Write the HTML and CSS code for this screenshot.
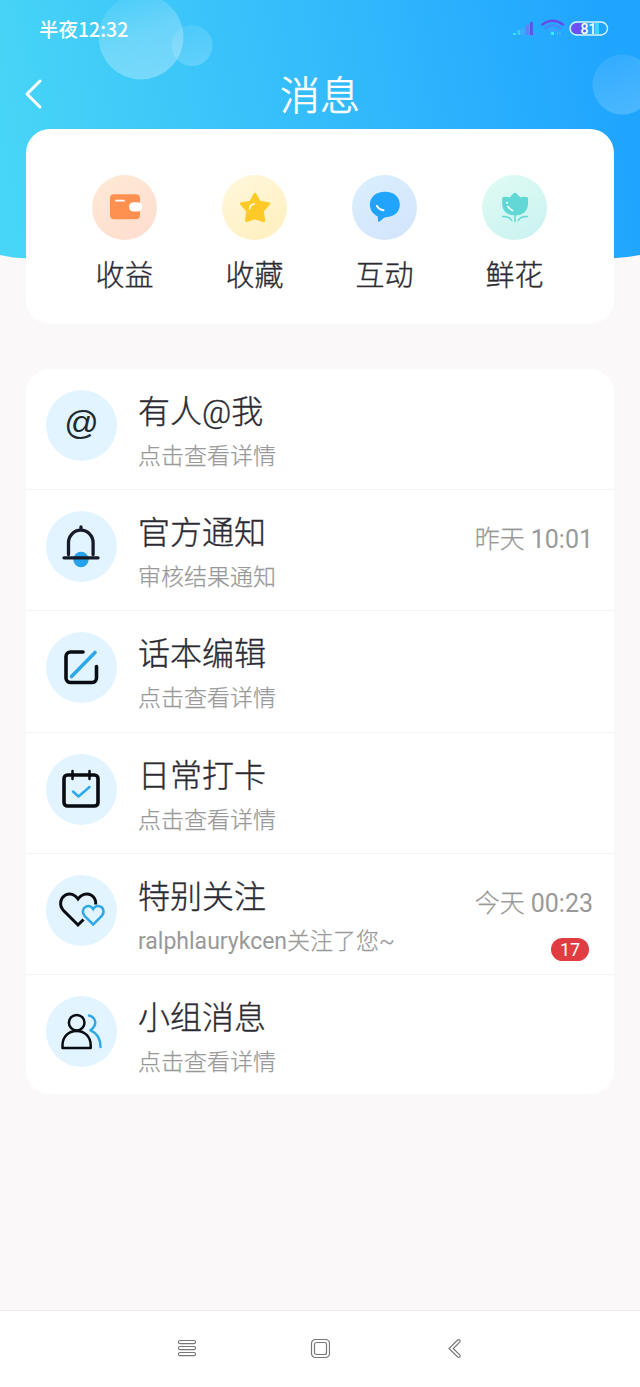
FILE: index.html
```html
<!DOCTYPE html>
<html lang="zh-CN">
<head>
<meta charset="utf-8">
<title>消息</title>
<link rel="stylesheet" href="styles.css">
</head>
<body>
<div class="screen">
  <svg class="backdrop" viewBox="0 0 640 264" aria-hidden="true">
    <defs>
      <linearGradient id="sky" gradientUnits="userSpaceOnUse" x1="0" y1="170" x2="610" y2="50"><stop offset="0" stop-color="#48d6f6"/><stop offset=".5" stop-color="#35bdfb"/><stop offset="1" stop-color="#20a5ff"/></linearGradient>
      <linearGradient id="bubble" x1=".25" y1="0" x2=".65" y2="1"><stop offset="0" stop-color="#fff" stop-opacity=".06"/><stop offset=".5" stop-color="#fff" stop-opacity=".24"/><stop offset="1" stop-color="#fff" stop-opacity=".3"/></linearGradient>
      <linearGradient id="bubble2" x1=".25" y1="0" x2=".7" y2="1"><stop offset="0" stop-color="#fff" stop-opacity=".08"/><stop offset="1" stop-color="#fff" stop-opacity=".2"/></linearGradient>
    </defs>
    <path d="M0 0H640V255Q625 258 610 258.500H30Q12 258 0 255Z" fill="url(#sky)"/>
    <circle cx="141" cy="37" r="42.500" fill="url(#bubble)"/>
    <circle cx="192" cy="45.500" r="20.500" fill="url(#bubble2)"/>
    <circle cx="622.500" cy="84.500" r="30" fill="url(#bubble2)"/>
  </svg>

  <header class="header">
    <div class="status">
      <span class="clock">半夜12:32</span>
      <svg class="signals" width="98" height="20" viewBox="0 0 98 20">
        <g><rect x="2" y="14" width="3" height="2" fill="#37e6f4"/><rect x="6.500" y="11" width="3" height="5" fill="#42caf8"/><rect x="10.500" y="8.500" width="3" height="7.500" fill="#4aa5fa"/><rect x="15" y="6" width="3" height="10" fill="#5b83f1"/><rect x="19" y="3" width="2.800" height="13" rx=".6" fill="#6050e8"/></g>
        <g fill="none" stroke-linecap="round"><path d="M31.500 5.500Q41.500-2 52 5.500" stroke="#674be8" stroke-width="2.500"/><path d="M34.500 9Q41.500 3.500 49 9" stroke="#4b86f5" stroke-width="2.300"/><path d="M37.500 12Q41.500 9 46 12" stroke="#469cfa" stroke-width="2"/></g>
        <circle cx="41.500" cy="14.500" r="1.800" fill="#36eefa"/><path d="M46.500 13v3M49 13v3" stroke="#57b6ff" stroke-width="1"/>
        <path d="M66 4h4v11h-4a5.500 5.500 0 0 1 0-11" fill="#704ff0"/><rect x="69" y="4" width="6" height="11" fill="#565ff0"/><rect x="84" y="4" width="4" height="11" fill="#36d9fa"/>
        <rect x="59" y="3" width="37.500" height="13" rx="6.500" fill="none" stroke="#d9f2ff" stroke-width="1.400"/>
        <text class="battery-text" x="77.500" y="14.500" text-anchor="middle">81</text>
      </svg>
    </div>
    <div class="titlebar">
      <svg class="back" width="20" height="34" viewBox="0 0 20 34"><path d="M16 4 3 17l13 13" /></svg>
      <h1 class="title">消息</h1>
    </div>
  </header>

  <section class="shortcuts">
    <div class="shortcut">
      <svg class="shortcut-icon income" viewBox="0 0 65 65"><rect x="18" y="19.300" width="30" height="25" rx="4" fill="#ff9150"/><rect x="37" y="27.200" width="13" height="9.300" rx="4.650" fill="#fff"/><path d="M24 25.700h8" stroke="#fff" stroke-width="1.700" stroke-linecap="round"/></svg>
      <span>收益</span>
    </div>
    <div class="shortcut">
      <svg class="shortcut-icon favorite" viewBox="0 0 65 65"><path d="M33 19.500 37.300 27.300 46.500 28.800 40.200 36 41.500 45.600 33 42.800 24.600 45.600 25.900 36 19.600 28.800 28.700 27.300Z" fill="#ffc928" stroke="#ffc928" stroke-width="3.200" stroke-linejoin="round"/><path d="M27.700 33.800Q28 29.400 32 28.800" fill="none" stroke="#fffbe7" stroke-width="1.700" stroke-linecap="round"/></svg>
      <span>收藏</span>
    </div>
    <div class="shortcut">
      <svg class="shortcut-icon interact" viewBox="0 0 65 65"><path d="M33 16.800c9 0 14.800 5.200 14.800 12.800 0 7.400-5.500 12.300-13.800 12.700-3 .2-5.400 4.300-7 4.400-1.200 0-1-3.300-1.200-5.300-5-2-7.900-6.500-7.900-11.800 0-7.500 6-12.800 15.100-12.800Z" fill="#20a4fd"/><path d="M25 31Q27 34.700 31.500 35.200" fill="none" stroke="#fff" stroke-width="2" stroke-linecap="round"/></svg>
      <span>互动</span>
    </div>
    <div class="shortcut">
      <svg class="shortcut-icon flower" viewBox="0 0 65 65"><path d="M20.200 22.500Q23.800 20.800 27.500 22.500L31.700 18.300Q33 17.200 34.300 18.300L38.500 22.500Q42.300 20.800 46 22.500V29c0 7-5.600 11.500-13 11.500S20.200 36 20.200 29Z" fill="#62d8d6"/><path d="M33 39v7.500M20.700 41.500q6.500-.5 9 4M45.300 41.500q-6.500-.5-9 4" fill="none" stroke="#62d8d6" stroke-width="1.500" stroke-linecap="round"/><circle cx="25" cy="27.800" r="1.100" fill="#effffc"/><path d="M26 31.500q1.500 2.800 4.500 4" fill="none" stroke="#effffc" stroke-width="1.700" stroke-linecap="round"/></svg>
      <span>鲜花</span>
    </div>
  </section>

  <main class="messages">
    <article class="row">
      <svg class="row-icon" viewBox="0 0 71 71"><text class="at-sign" x="35.500" y="44" text-anchor="middle">@</text></svg>
      <div class="copy"><h2>有人@我</h2><p>点击查看详情</p></div>
    </article>
    <article class="row">
      <svg class="row-icon" viewBox="0 0 71 71"><circle cx="35" cy="48.500" r="7.700" fill="#26a1ed"/><g class="ink bell"><path d="M22.500 43.500V31.500a12.300 12.300 0 0 1 24.600 0v12M35 19v-3M18 46.800h34"/></g></svg>
      <div class="copy"><h2>官方通知</h2><p>审核结果通知</p></div>
      <div class="meta"><time>昨天 <span class="latin">10:01</span></time></div>
    </article>
    <article class="row">
      <svg class="row-icon" viewBox="0 0 71 71"><path class="ink bold" d="M37 20H24.500a4.500 4.500 0 0 0-4.500 4.500V46a4.500 4.500 0 0 0 4.500 4.500H46a4.500 4.500 0 0 0 4.500-4.500V34.500"/><path class="accent bold" d="M49 20.500 25.500 44.500"/></svg>
      <div class="copy"><h2>话本编辑</h2><p>点击查看详情</p></div>
    </article>
    <article class="row">
      <svg class="row-icon" viewBox="0 0 71 71"><g class="ink bold"><rect x="18" y="21" width="34" height="31" rx="3.500"/></g><path class="ink" d="M26.500 17v8M43.500 17v8"/><path class="accent" d="M27 37.500l5.500 5 11-9.500"/></svg>
      <div class="copy"><h2>日常打卡</h2><p>点击查看详情</p></div>
    </article>
    <article class="row">
      <svg class="row-icon" viewBox="0 0 71 71"><path class="ink heart" d="M37.500 44.500l-5.500 5.500-14.500-14.500C12.500 30 14.500 23 19.500 20c4.500-2.500 9.500-.5 12.500 3.800C35 19.500 40.500 17.500 45 20c3.200 1.800 5 5.500 4.700 9.500"/><path class="accent heart" d="M47.200 49.500 39 41.300c-3.500-3.500-2.300-8.200.8-9.600 2.700-1.200 5.700-.2 7.400 2.400 1.700-2.600 4.700-3.600 7.400-2.400 3.200 1.500 4.200 6.200.7 9.600Z"/></svg>
      <div class="copy"><h2>特别关注</h2><p><span class="latin">ralphlaurykcen</span>关注了您~</p></div>
      <div class="meta"><time>今天 <span class="latin">00:23</span></time><span class="count">17</span></div>
    </article>
    <article class="row">
      <svg class="row-icon" viewBox="0 0 71 71"><g class="ink person"><circle cx="30.700" cy="26.700" r="7.800"/><path d="M16.500 52V49.500C16.500 40.500 22.500 35 30.600 35S44.700 40.500 44.700 49.500V52Z"/></g><path class="accent person" d="M43 19.500c7.500 2 8.500 9.500 1.500 14.800 6.500 2.700 10 9 10 16.700"/></svg>
      <div class="copy"><h2>小组消息</h2><p>点击查看详情</p></div>
    </article>
  </main>

  <nav class="navbar">
    <svg width="20" height="20" viewBox="0 0 20 20"><rect x="1.500" y="1.500" width="17" height="3.200" rx="1.500"/><rect x="1.500" y="7.500" width="17" height="3.200" rx="1.500"/><rect x="1.500" y="13.500" width="17" height="3.200" rx="1.500"/></svg>
    <svg width="20" height="20" viewBox="0 0 20 20"><rect x="1.500" y=".5" width="18" height="18" rx="4"/><rect x="4.500" y="3.500" width="12" height="12" rx="2"/></svg>
    <svg width="20" height="20" viewBox="0 0 20 20"><path d="M13.700 1 5 9.500l8.700 8.500q1.200.7 2-.2t0-1.900L9.300 9.500l6.400-6.400q.8-1 0-1.900t-2-.2Z"/></svg>
  </nav>
</div>
</body>
</html>
```

FILE: styles.css
```css
* { box-sizing: border-box; }
body {
  margin: 0;
  font-family: Roboto, "Noto Sans CJK SC", sans-serif;
  color: #2b2b33;
}
h1, h2, p { margin: 0; font-weight: 300; }
svg { display: block; flex: none; }

.screen {
  position: relative;
  display: flex;
  flex-direction: column;
  height: 1387px;
  overflow: hidden;
  background: #faf8f9;
}
.backdrop { position: absolute; top: 0; left: 0; width: 640px; height: 264px; }

/* Status line and page title */
.header { position: relative; height: 129px; color: #fff; }
.status {
  display: flex;
  justify-content: space-between;
  align-items: center;
  height: 58px;
  padding: 0 31px 0 39px;
}
.clock { margin-top: -1px; font: 500 19.5px/28px "Noto Sans CJK SC", sans-serif; }
.battery-text { font: 500 14px Roboto, sans-serif; fill: #fff; }
.titlebar {
  display: grid;
  grid-template-columns: 20px 1fr 20px;
  align-items: center;
  height: 72px;
  padding: 0 24px;
}
.back path {
  fill: none;
  stroke: #fff;
  stroke-width: 3;
  stroke-linecap: round;
  stroke-linejoin: round;
}
.title {
  padding-top: 6px;
  font-size: 40px;
  line-height: 58px;
  text-align: center;
  -webkit-text-stroke: .6px currentColor;
}

/* Shortcut card */
.shortcuts {
  position: relative;
  display: grid;
  grid-template-columns: repeat(4, 130px);
  justify-content: center;
  height: 195px;
  margin: 0 26px;
  padding: 46px 1px 0 0;
  border-radius: 24px;
  background: #fff;
}
.shortcut {
  display: flex;
  flex-direction: column;
  align-items: center;
  gap: 14px;
  font-size: 29px;
  font-weight: 300;
  line-height: 44px;
  -webkit-text-stroke: .35px currentColor;
}
.shortcut-icon { width: 65px; height: 65px; border-radius: 50%; }
.income { background: linear-gradient(150deg, #ffead5, #fedccf); }
.favorite { background: linear-gradient(150deg, #fff8dd, #ffefbd); }
.interact { background: linear-gradient(150deg, #d9effd, #d3e4fc); }
.flower { background: linear-gradient(150deg, #e0fbf3, #c9f2f1); }

/* Message list */
.messages {
  margin: 45px 26px 0;
  border-radius: 24px;
  background: #fff;
}
.row {
  display: flex;
  height: 121.200px;
  padding: 21px 21px 0 20px;
  border-bottom: 1.500px solid #f4f3f4;
}
.row:last-child { height: 119.500px; border-bottom: 0; }
.row-icon {
  width: 71px;
  height: 71px;
  border-radius: 50%;
  background: #e2f4ff;
}
.at-sign { font: 34px "Liberation Sans", sans-serif; fill: #20292f; }
.copy { flex: 1; margin-left: 21px; }
.copy h2 {
  margin-top: -1px;
  font-size: 32px;
  line-height: 46px;
  -webkit-text-stroke: .35px currentColor;
}
.copy p {
  margin-top: 5px;
  font-size: 23px;
  line-height: 34px;
  color: #999;
  -webkit-text-stroke: .25px currentColor;
}
.meta {
  display: flex;
  flex-direction: column;
  align-items: flex-end;
  padding-top: 11px;
}
.meta time {
  font-size: 25px;
  font-weight: 300;
  line-height: 36px;
  color: #999;
  -webkit-text-stroke: .25px currentColor;
}
.latin { font-weight: 400; -webkit-text-stroke: 0; }
.count {
  width: 38px;
  height: 23px;
  margin: 16px 4px 0 0;
  border-radius: 12px;
  background: #e23c43;
  color: #fff;
  font-size: 18px;
  line-height: 24px;
  text-align: center;
}

/* Icon strokes */
.ink, .accent {
  fill: none;
  stroke: #080b0f;
  stroke-width: 2.500;
  stroke-linecap: round;
  stroke-linejoin: round;
}
.accent { stroke: #2fa8e8; }
.bold { stroke-width: 3.600; }
.bell { stroke: #171b29; stroke-width: 3.300; }
.heart { stroke-width: 3; stroke-linejoin: miter; stroke-linecap: butt; }
.accent.heart, .person { stroke-width: 2.500; }

/* System navigation */
.navbar {
  display: flex;
  justify-content: center;
  gap: 113.500px;
  height: 77px;
  margin-top: auto;
  padding-top: 28px;
  border-top: 1px solid #efedee;
  background: #fff;
}
.navbar svg { fill: none; stroke: #777; stroke-width: 1.200; }
```
